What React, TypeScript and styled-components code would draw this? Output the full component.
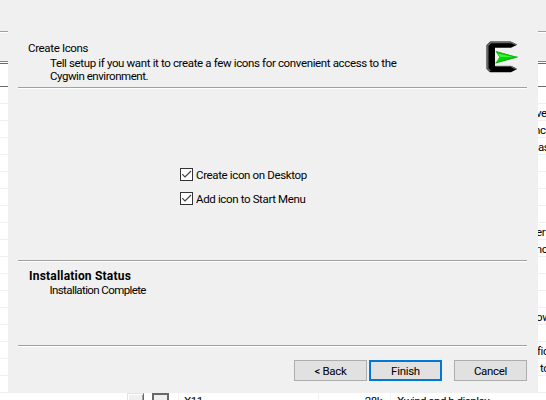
import React from "react";
import styled, { createGlobalStyle } from "styled-components";

const GlobalStyle = createGlobalStyle`
  * { box-sizing: border-box; }
  body { margin: 0; background: #fff; overflow: hidden; }
`;

const Screen = styled.div`
  width: 546px;
  height: 400px;
  overflow: hidden;
  display: grid;
  grid-template-columns: 8px 530px 8px;
  grid-template-rows: 393px 7px;
  background: #fff;
  color: #000;
  font: 11.5px/13px Roboto, "Liberation Sans", sans-serif;
`;

const Edge = styled.div`
  overflow: hidden;
`;

const EdgeHeader = styled.div`
  height: 87px;
  background: linear-gradient(
    #f0f0f0 0 31px, #a0a0a0 31px 32px, #fff 32px 33px, #f0f0f0 33px 61px,
    #868686 61px 62px, #fff 62px 63px, #696969 63px 64px, #fff 64px 86px, #696969 86px 87px
  );
`;

const ListRow = styled.div`
  height: 17px;
  border-bottom: 1px solid #f0f0f0;
  line-height: 19px;
  white-space: nowrap;
`;

const Dialog = styled.main`
  display: flex;
  flex-direction: column;
  background: #f0f0f0;
`;

const Header = styled.header`
  height: 87px;
  display: flex;
  justify-content: space-between;
  padding: 41px 20px 0 20px;
`;

const Heading = styled.h1<{ $bold?: boolean }>`
  margin: 0;
  font-size: ${(p) => (p.$bold ? 12 : 11.5)}px;
  font-weight: ${(p) => (p.$bold ? 700 : 400)};
  line-height: 14px;
  letter-spacing: ${(p) => (p.$bold ? 0.2 : -0.35)}px;
`;

const Detail = styled.p<{ $top?: number; $spacing?: number; $indent?: number }>`
  margin: ${(p) => p.$top ?? 0}px 0 0 ${(p) => p.$indent ?? 22}px;
  letter-spacing: ${(p) => p.$spacing ?? -0.36}px;
  white-space: nowrap;
`;

const Rule = styled.hr`
  flex: none;
  width: 509px;
  height: 2px;
  margin: 0 0 0 10px;
  border: 0;
  border-top: 1px solid #a0a0a0;
  border-bottom: 1px solid #fff;
`;

const Options = styled.section`
  height: 171px;
  padding: 79px 0 0 172px;
  display: flex;
  flex-direction: column;
  gap: 11px;
`;

const Option = styled.label`
  display: flex;
  align-items: center;
  height: 13px;
  gap: 3px;
  letter-spacing: -0.36px;
  white-space: nowrap;
`;

const OptionText = styled.span`
  padding-top: 2px;
`;

const Status = styled.section`
  height: 83px;
  padding: 7px 0 0 21px;
`;

const Actions = styled.footer`
  display: flex;
  padding: 13px 0 0 286px;
`;

const Button = styled.button<{ $primary?: boolean; $gap?: number }>`
  width: 73px;
  height: 21px;
  margin: 0 0 0 ${(p) => p.$gap ?? 0}px;
  padding: 1px 0 0;
  border: ${(p) => (p.$primary ? "2px solid #0078d7" : "1px solid #adadad")};
  background: #e1e1e1;
  color: #000;
  font: inherit;
  letter-spacing: -0.3px;
`;

const BottomStrip = styled.div`
  grid-column: 1 / -1;
  display: grid;
  grid-template-columns: 127px 17px 8px 17px 9px 140px 72px 1fr;
  overflow: hidden;
  letter-spacing: -0.5px;
`;

const Cell = styled.div<{ $align?: string; $pad?: number; $line?: boolean }>`
  padding: 2px ${(p) => p.$pad ?? 0}px 0;
  text-align: ${(p) => p.$align ?? "left"};
  border-left: ${(p) => (p.$line ? "1px solid #f0f0f0" : "0")};
  white-space: nowrap;
`;

const ScrollPiece = styled.div`
  height: 20px;
  background: #f0f0f0;
  border: 1px solid #e3e3e3;
  border-right: 1px solid #696969;
  box-shadow: inset 1px 1px #fff, inset -1px 0 #a0a0a0;
`;

const FramePiece = styled.div`
  height: 20px;
  border: 2px solid #696969;
  background: #f0f0f0;
`;

function CygwinLogo() {
  return (
    <svg width="32" height="32" viewBox="0 0 32 32">
      <path d="M4 0.7H25L31.2 3.7 25 6.8H9V24.9H25L31.2 28 25 31.2H4L0.6 28V4Z" fill="#000" />
      <path d="M25 1.3H4.8L1.5 4.6V27.5L4 30.4" fill="none" stroke="#666" strokeWidth="2" />
      <path d="M25 25.4H9.5" fill="none" stroke="#444" strokeWidth="1.2" />
      <path d="M25 1.3L30 3.6M25 25.3L30 27.8" stroke="#666" strokeWidth="1.4" />
      <path d="M9.5 10L31.5 16 9.5 22 13.5 16Z" fill="#00d800" />
      <path d="M9.5 10L31.5 16H13.5Z" fill="#15b915" />
      <path d="M12 12.5L27 16H14Z" fill="#39f639" />
      <path d="M9.5 22L31.5 16" stroke="#079807" strokeWidth="0.9" />
    </svg>
  );
}

function CheckMark() {
  return (
    <svg width="13" height="13" viewBox="0 0 13 13">
      <rect x="0.5" y="0.5" width="12" height="12" fill="#fff" stroke="#333" />
      <path d="M2.2 6.2L5 9 11 3" fill="none" stroke="#444" strokeWidth="1.2" />
    </svg>
  );
}

const rightRows: [string, number][] = [
  ["", 0], ["ve", -2], ["nc", -4], ["as", 0], ["", 0], ["", 0], ["", 0], ["", 0],
  ["er", -2], ["mo", -6], ["", 0], ["", 0], ["", 0], ["ow", -2], ["", 0],
  ["fic", -1], ["to", 2], ["", 0],
];

const Clip = styled.div<{ $shift: number }>`
  margin-left: ${(p) => p.$shift}px;
  letter-spacing: -0.4px;
`;

export default function App() {
  return (
    <>
      <GlobalStyle />
      <Screen>
        <Edge>
          <EdgeHeader />
          {rightRows.map((_, i) => <ListRow key={i} />)}
        </Edge>
        <Dialog>
          <Header>
            <div>
              <Heading>Create Icons</Heading>
              <Detail $top={2}>
                Tell setup if you want it to create a few icons for convenient access to the
              </Detail>
              <Detail $spacing={-0.46}>Cygwin environment.</Detail>
            </div>
            <CygwinLogo />
          </Header>
          <Rule />
          <Options>
            <Option><CheckMark /><OptionText>Create icon on Desktop</OptionText></Option>
            <Option><CheckMark /><OptionText>Add icon to Start Menu</OptionText></Option>
          </Options>
          <Rule />
          <Status>
            <Heading as="h2" $bold>Installation Status</Heading>
            <Detail $top={1} $spacing={-0.6} $indent={20.5}>Installation Complete</Detail>
          </Status>
          <Rule />
          <Actions>
            <Button>&lt; Back</Button>
            <Button $primary $gap={2}>Finish</Button>
            <Button $gap={12}>Cancel</Button>
          </Actions>
        </Dialog>
        <Edge>
          <EdgeHeader />
          {rightRows.map(([text, shift], i) => (
            <ListRow key={i}><Clip $shift={shift}>{text}</Clip></ListRow>
          ))}
        </Edge>
        <BottomStrip>
          <Cell />
          <ScrollPiece />
          <Cell />
          <FramePiece />
          <Cell />
          <Cell $line $pad={5}>X11</Cell>
          <Cell $line $pad={8} $align="right">28k</Cell>
          <Cell $line $pad={6}>Xwind and b display</Cell>
        </BottomStrip>
      </Screen>
    </>
  );
}
